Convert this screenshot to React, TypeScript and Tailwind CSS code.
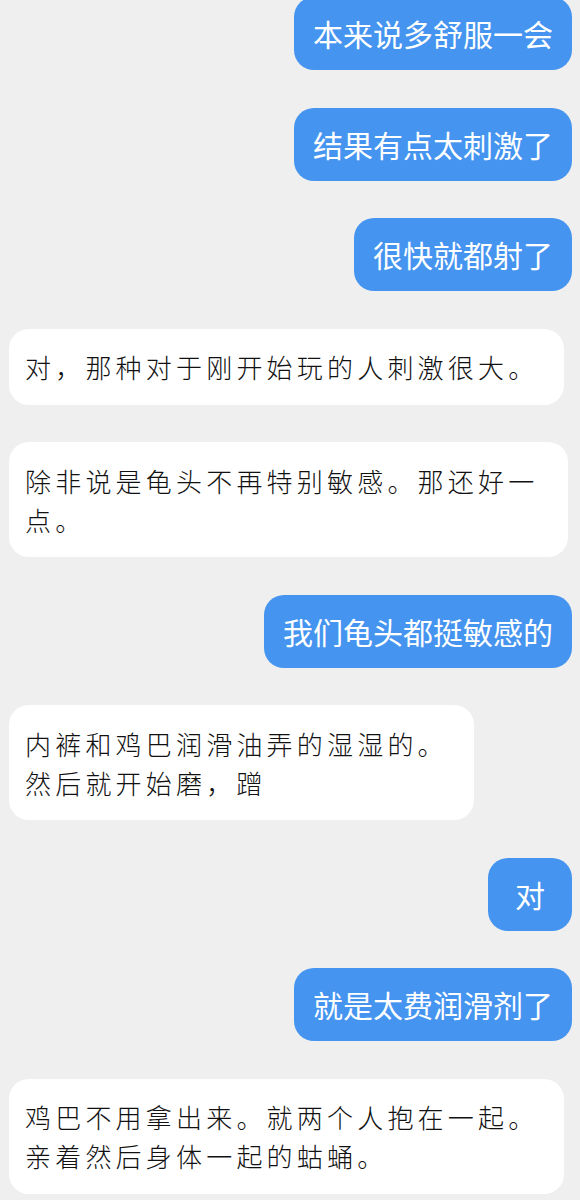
type Msg = {
  side: "left" | "right";
  text: string;
};

const messages: Msg[] = [
  { side: "right", text: "本来说多舒服一会" },
  { side: "right", text: "结果有点太刺激了" },
  { side: "right", text: "很快就都射了" },
  { side: "left", text: "对，那种对于刚开始玩的人刺激很大。" },
  { side: "left", text: "除非说是龟头不再特别敏感。那还好一点。" },
  { side: "right", text: "我们龟头都挺敏感的" },
  { side: "left", text: "内裤和鸡巴润滑油弄的湿湿的。\n然后就开始磨，蹭" },
  { side: "right", text: "对" },
  { side: "right", text: "就是太费润滑剂了" },
  { side: "left", text: "鸡巴不用拿出来。就两个人抱在一起。\n亲着然后身体一起的蛄蛹。" },
];

export default function App() {
  return (
    <div className="h-[1200px] w-[580px] overflow-hidden bg-[#efefef] font-['Noto_Sans_CJK_SC','Noto_Sans',sans-serif]">
      <div className="-mt-[3px] flex flex-col gap-[37.5px] px-[8px]">
        {messages.map((m, i) =>
          m.side === "right" ? (
            <div key={i} className="flex justify-end">
              <div className="min-w-[84px] rounded-[20px] bg-[#4494f0] px-[19px] py-[16px] text-center text-[30px] leading-[41px] text-white">
                {m.text}
              </div>
            </div>
          ) : (
            <div key={i} className="flex justify-start pl-[1px]">
              <div className="max-w-[559px] whitespace-pre-line rounded-[20px] bg-white py-[18.5px] pl-[16px] pr-[26px] text-[26px] leading-[39px] font-light tracking-[4.2px] text-[#111]">
                {m.text}
              </div>
            </div>
          )
        )}
      </div>
    </div>
  );
}
